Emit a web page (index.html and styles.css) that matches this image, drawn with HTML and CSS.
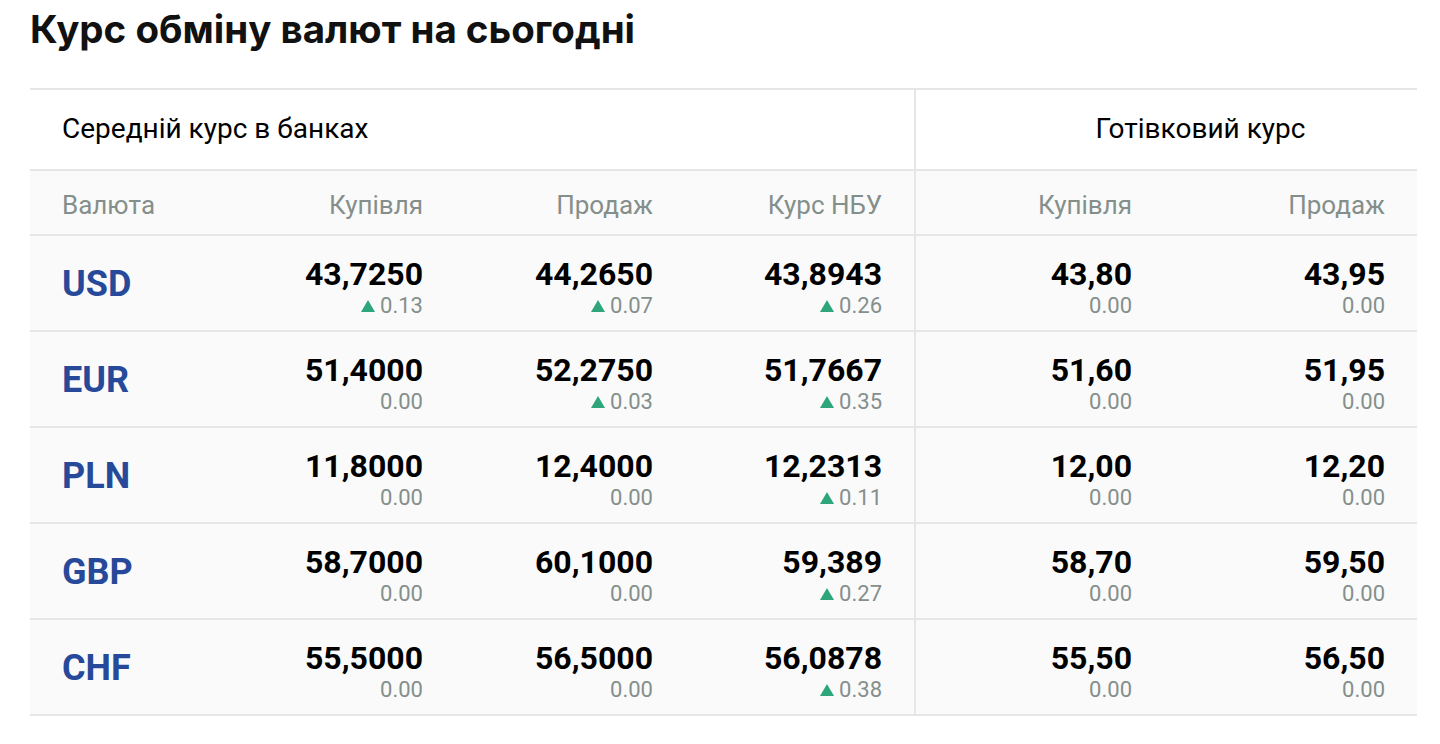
FILE: index.html
```html
<!DOCTYPE html>
<html lang="uk">
<head>
<meta charset="utf-8">
<title>Курс обміну валют на сьогодні</title>
<link rel="stylesheet" href="styles.css">
</head>
<body>
<div class="page">
  <h1 class="title">Курс обміну валют на сьогодні</h1>
  <table class="rates">
    <colgroup>
      <col class="c-cur"><col class="c-num"><col class="c-num"><col class="c-num"><col class="c-cash1"><col class="c-cash2">
    </colgroup>
    <thead>
      <tr class="group-row">
        <th colspan="4" class="group left">Середній курс в банках</th>
        <th colspan="2" class="group center divider">Готівковий курс</th>
      </tr>
      <tr class="label-row">
        <th class="label left">Валюта</th>
        <th class="label">Купівля</th>
        <th class="label">Продаж</th>
        <th class="label">Курс НБУ</th>
        <th class="label divider">Купівля</th>
        <th class="label">Продаж</th>
      </tr>
    </thead>
    <tbody>
      <tr>
        <td class="cur">USD</td>
        <td><div class="val">43,7250</div><div class="chg"><span class="up"></span>0.13</div></td>
        <td><div class="val">44,2650</div><div class="chg"><span class="up"></span>0.07</div></td>
        <td><div class="val">43,8943</div><div class="chg"><span class="up"></span>0.26</div></td>
        <td class="divider"><div class="val">43,80</div><div class="chg">0.00</div></td>
        <td><div class="val">43,95</div><div class="chg">0.00</div></td>
      </tr>
      <tr>
        <td class="cur">EUR</td>
        <td><div class="val">51,4000</div><div class="chg">0.00</div></td>
        <td><div class="val">52,2750</div><div class="chg"><span class="up"></span>0.03</div></td>
        <td><div class="val">51,7667</div><div class="chg"><span class="up"></span>0.35</div></td>
        <td class="divider"><div class="val">51,60</div><div class="chg">0.00</div></td>
        <td><div class="val">51,95</div><div class="chg">0.00</div></td>
      </tr>
      <tr>
        <td class="cur">PLN</td>
        <td><div class="val">11,8000</div><div class="chg">0.00</div></td>
        <td><div class="val">12,4000</div><div class="chg">0.00</div></td>
        <td><div class="val">12,2313</div><div class="chg"><span class="up"></span>0.11</div></td>
        <td class="divider"><div class="val">12,00</div><div class="chg">0.00</div></td>
        <td><div class="val">12,20</div><div class="chg">0.00</div></td>
      </tr>
      <tr>
        <td class="cur">GBP</td>
        <td><div class="val">58,7000</div><div class="chg">0.00</div></td>
        <td><div class="val">60,1000</div><div class="chg">0.00</div></td>
        <td><div class="val">59,389</div><div class="chg"><span class="up"></span>0.27</div></td>
        <td class="divider"><div class="val">58,70</div><div class="chg">0.00</div></td>
        <td><div class="val">59,50</div><div class="chg">0.00</div></td>
      </tr>
      <tr>
        <td class="cur">CHF</td>
        <td><div class="val">55,5000</div><div class="chg">0.00</div></td>
        <td><div class="val">56,5000</div><div class="chg">0.00</div></td>
        <td><div class="val">56,0878</div><div class="chg"><span class="up"></span>0.38</div></td>
        <td class="divider"><div class="val">55,50</div><div class="chg">0.00</div></td>
        <td><div class="val">56,50</div><div class="chg">0.00</div></td>
      </tr>
    </tbody>
  </table>
</div>
</body>
</html>
```

FILE: styles.css
```css
* { box-sizing: border-box; }
html, body { margin: 0; padding: 0; background: #fff; }
body { font-family: Roboto, "Noto Sans", sans-serif; color: #000; }

.page { padding: 0 23px 0 30px; }

.title {
  font-family: Inter, Roboto, sans-serif;
  font-weight: 700;
  font-size: 38.5px;
  line-height: 46px;
  letter-spacing: 0;
  margin: 6px 0 36px;
  color: #111;
}

.rates {
  width: 1387px;
  table-layout: fixed;
  border-collapse: collapse;
  border-top: 2px solid #e6e6e6;
}
.c-cur { width: 195px; }
.c-num { width: 230px; }
.c-cash1 { width: 249px; }
.c-cash2 { width: 253px; }

.rates th, .rates td {
  padding: 0 32px;
  text-align: right;
  border-bottom: 2px solid #e6e6e6;
}
.rates .left { text-align: left; }
.rates .center { text-align: center; }
.rates .divider { border-left: 2px solid #e6e6e6; }

.rates .group-row th {
  height: 81px;
  font-weight: 400;
  font-size: 28px;
  background: #fff;
  vertical-align: middle;
  padding-bottom: 2px;
}
.rates .group-row th.center { padding-left: 68px; padding-right: 0; }

.rates .label-row th {
  height: 65px;
  font-weight: 400;
  font-size: 26px;
  color: #848f8c;
  background: #fafafa;
  vertical-align: middle;
  padding-top: 4px;
}

.rates tbody td {
  height: 96px;
  background: #fafafa;
  vertical-align: top;
  padding-top: 21px;
}
.rates tbody td.cur {
  text-align: left;
  vertical-align: middle;
  padding-top: 2px;
  padding-bottom: 0;
  font-weight: 700;
  font-size: 36px;
  color: #27499a;
}

.val {
  font-weight: 700;
  font-size: 32px;
  line-height: 34px;
  color: #000;
}
.chg {
  font-size: 22px;
  line-height: 24px;
  color: #848f8c;
  margin-top: 3px;
}
.up {
  display: inline-block;
  width: 0;
  height: 0;
  border-left: 7px solid transparent;
  border-right: 7px solid transparent;
  border-bottom: 12px solid #2ea57a;
  margin-right: 5px;
  vertical-align: 1px;
}
```
